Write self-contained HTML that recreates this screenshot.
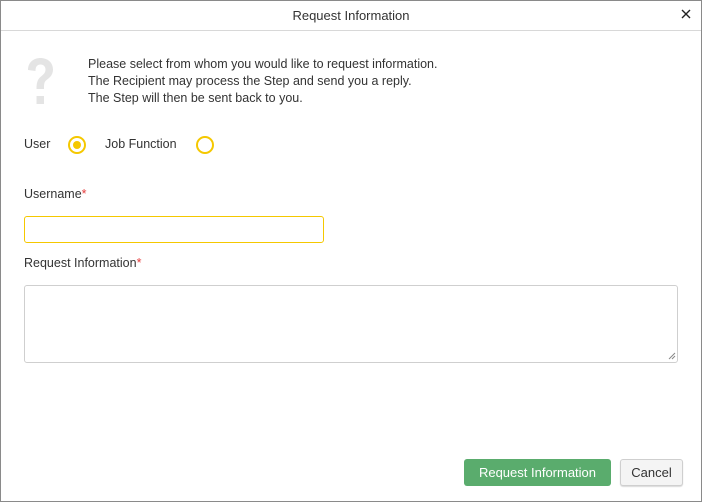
<!DOCTYPE html>
<html><head><style>
*{box-sizing:border-box;margin:0;padding:0}
body{width:702px;height:502px;background:#fff;font-family:"Liberation Sans",sans-serif;font-size:12.5px;color:#333;position:relative;overflow:hidden}
.frame{position:absolute;left:0;top:0;width:702px;height:502px;border:1px solid #8a8a8a}
.hdr{position:absolute;left:1px;top:1px;width:700px;height:30px;border-bottom:1px solid #d8d8d8;text-align:center;line-height:29px;font-size:13px;color:#333}
.abs{position:absolute;white-space:nowrap}
.radio{position:absolute;width:18px;height:18px;border:2px solid #f5c800;border-radius:50%}
.dot{position:absolute;left:3px;top:3px;width:8px;height:8px;border-radius:50%;background:#f5c800}
.req{color:#e53b3b}
.inp{position:absolute;border-radius:3px}
.btn{position:absolute;border-radius:3px;text-align:center;font-size:13px}
</style></head><body>
<div class="frame"></div>
<div class="hdr">Request Information</div>
<svg style="position:absolute;left:681px;top:9px" width="10" height="10" viewBox="0 0 10 10"><path d="M1 1L9 9M9 1L1 9" stroke="#222" stroke-width="1.4"/></svg>
<svg style="position:absolute;left:28px;top:58px" width="25" height="48" viewBox="0 0 25 48"><path d="M0 12C0 4 6 0 12.5 0C19.5 0 25 4.5 25 11.5C25 17.5 21 20 18 22.5C16 24.5 16 26.5 16 31H8.5C8.5 24.5 9.5 21.5 13 18.5C16 16 17.5 14.5 17.5 11.5C17.5 8.5 15.5 6.5 12.5 6.5C9 6.5 7.5 9 7.5 13Z" fill="#e4e4e4"/><rect x="8.5" y="38" width="7.5" height="8" fill="#e4e4e4"/></svg>
<div class="abs" style="left:88px;top:56px;line-height:17px">Please select from whom you would like to request information.<br>The Recipient may process the Step and send you a reply.<br>The Step will then be sent back to you.</div>
<div class="abs" style="left:24px;top:137px">User</div>
<div class="radio" style="left:68px;top:136px"><div class="dot"></div></div>
<div class="abs" style="left:105px;top:137px">Job Function</div>
<div class="radio" style="left:196px;top:136px"></div>
<div class="abs" style="left:24px;top:187px">Username<span class="req">*</span></div>
<div class="inp" style="left:24px;top:216px;width:300px;height:27px;border:1px solid #f5c800"></div>
<div class="abs" style="left:24px;top:256px">Request Information<span class="req">*</span></div>
<div class="inp" style="left:24px;top:285px;width:654px;height:78px;border:1px solid #cfcfcf"></div>
<svg style="position:absolute;left:668px;top:352px" width="8" height="8" viewBox="0 0 8 8"><path d="M7 1L1 7M7 4L4 7" stroke="#888" stroke-width="1"/></svg>
<div class="btn" style="left:464px;top:459px;width:147px;height:27px;background:#5aac6d;color:#fff;line-height:27px">Request Information</div>
<div class="btn" style="left:620px;top:459px;width:63px;height:27px;background:#f4f4f4;border:1px solid #cfcfcf;line-height:25px;color:#333;box-shadow:0 1px 1px rgba(0,0,0,.15)">Cancel</div>
</body></html>
